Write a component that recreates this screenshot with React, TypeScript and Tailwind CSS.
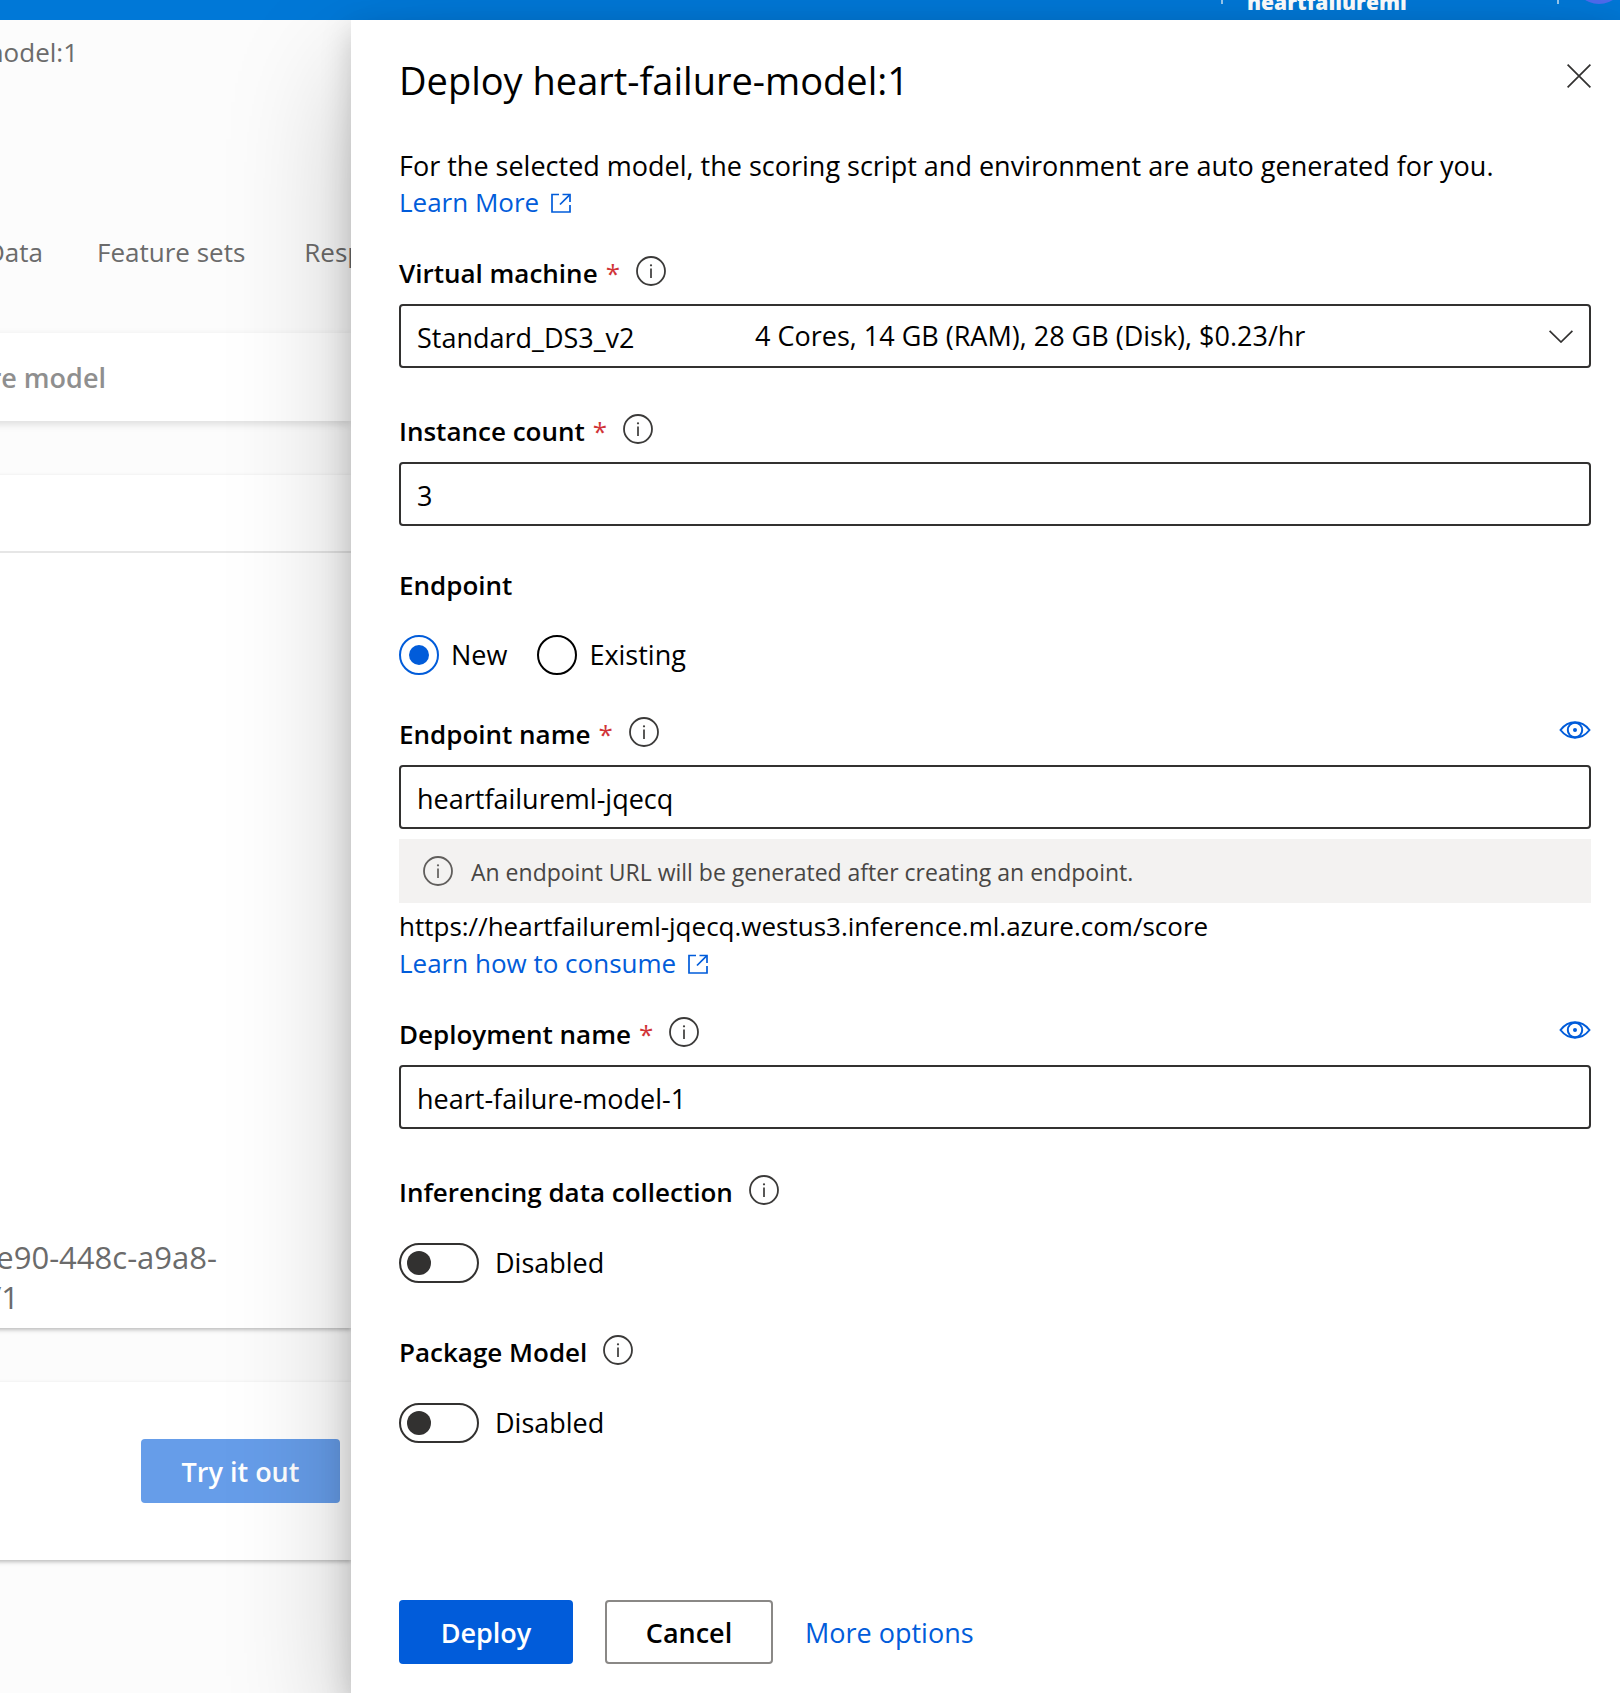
import { useState } from "react";
import type { ReactNode } from "react";

function InfoIcon({ muted = false }: { muted?: boolean }) {
  return (
    <svg viewBox="0 0 30 30" className={muted ? "size-[30px] shrink-0 text-[#605e5c]" : "size-[30px] shrink-0 text-[#3b3a39]"} fill="none" aria-hidden="true">
      <circle cx="15" cy="15" r="14" stroke="currentColor" strokeWidth="1.8" />
      <path d="M15 12.5V22" stroke="currentColor" strokeWidth="1.7" />
      <circle cx="15" cy="9.3" r="1.1" fill="currentColor" />
    </svg>
  );
}

function OpenIcon() {
  return (
    <svg viewBox="0 0 20 20" className="size-5 shrink-0" fill="none" stroke="currentColor" strokeWidth="1.7" aria-hidden="true">
      <path d="M8 1.5H1V19H19V12" />
      <path d="M11.5 1.5H19V9" />
      <path d="M18.6 1.9L9 11.5" />
    </svg>
  );
}

function EyeIcon() {
  return (
    <svg viewBox="0 0 32 18" className="h-[18px] w-8" fill="none" stroke="currentColor" strokeWidth="2" aria-hidden="true">
      <path d="M1.5 9C5 4.5 10 1.3 16 1.3S27 4.5 30.5 9C27 13.5 22 16.7 16 16.7S5 13.5 1.5 9Z" />
      <circle cx="16" cy="9" r="7.2" />
      <circle cx="16" cy="9" r="2" fill="currentColor" stroke="none" />
    </svg>
  );
}

function FieldLabel({ id, text, required = false, reveal = false }: { id: string; text: string; required?: boolean; reveal?: boolean }) {
  return (
    <div className="flex h-[37px] items-start">
      <label htmlFor={id} className="pt-px text-[26px] font-semibold">
        {text}
        {required && <span className="ml-2 font-normal text-[#d13438]">*</span>}
      </label>
      <button type="button" aria-label={`About ${text}`} className="ml-4 mt-0.5">
        <InfoIcon />
      </button>
      {reveal && (
        <button type="button" aria-label={`Show ${text}`} className="ml-auto mt-1.5 text-[#015cda]">
          <EyeIcon />
        </button>
      )}
    </div>
  );
}

function TextField({ id, initial }: { id: string; initial: string }) {
  const [value, setValue] = useState(initial);
  return (
    <input
      id={id}
      type="text"
      value={value}
      onChange={(e) => setValue(e.target.value)}
      className="mt-[13px] block h-16 w-full rounded-sm border-2 border-[#323130] bg-white px-4 pt-0.5"
    />
  );
}

function RadioOption({ value, current, onPick }: { value: string; current: string; onPick: (v: string) => void }) {
  return (
    <label className="flex items-center gap-3">
      <input
        type="radio"
        name="endpoint"
        value={value}
        checked={current === value}
        onChange={() => onPick(value)}
        className="grid size-10 appearance-none place-content-center rounded-full border-2 border-black before:size-5 before:rounded-full checked:border-[#015cda] checked:before:bg-[#015cda]"
      />
      <span className="pb-0.5">{value}</span>
    </label>
  );
}

function Toggle({ id }: { id: string }) {
  const [on, setOn] = useState(false);
  return (
    <div className="mt-[33px] flex h-10 items-center gap-4">
      <input
        id={id}
        type="checkbox"
        role="switch"
        checked={on}
        onChange={() => setOn(!on)}
        className="flex h-10 w-20 appearance-none items-center rounded-full border-2 border-[#323130] px-1.5 before:size-6 before:rounded-full before:bg-[#323130] checked:justify-end"
      />
      <span className="pb-0.5">{on ? "Enabled" : "Disabled"}</span>
    </div>
  );
}

function BlueLink({ children }: { children: ReactNode }) {
  return (
    <a href="#" className="flex w-fit items-center gap-3 text-[26px] text-[#015cda]">
      {children}
      <OpenIcon />
    </a>
  );
}

function Backdrop() {
  return (
    <div className="flex w-[351px] shrink-0 flex-col overflow-hidden whitespace-nowrap bg-[#fcfcfc] text-[#6b6b6b]">
      <div className="flex h-[313px] flex-col text-[26px]">
        <div className="mt-[14px] flex w-[78px] justify-end">model:1</div>
        <nav className="mt-[163px] flex">
          <a href="#" className="flex w-[43px] shrink-0 justify-end">Data</a>
          <a href="#" className="ml-[54px] shrink-0">Feature sets</a>
          <a href="#" className="ml-[59px] min-w-0 overflow-hidden">Resp</a>
        </nav>
      </div>
      <div className="-ml-4 flex h-[88px] items-center bg-white pl-4 shadow-[0_3px_8px_rgba(0,0,0,0.13)]">
        <div className="flex w-[106px] justify-end font-semibold text-[#8f8f8f]">feature model</div>
      </div>
      <section className="-ml-4 mt-[54px] flex h-[853px] flex-col bg-white shadow-[0_2px_4px_rgba(0,0,0,0.25)]">
        <div className="h-[78px] border-b-2 border-[#e6e6e6]" />
        <div className="mt-auto mb-[11px] pl-4 text-[31px] leading-10">
          <div className="flex w-[217px] justify-end">e90-448c-a9a8-</div>
          <div className="flex w-[19px] justify-end">/1</div>
        </div>
      </section>
      <section className="-ml-4 mt-[54px] flex h-[178px] items-center justify-end bg-white pr-[11px] shadow-[0_2px_4px_rgba(0,0,0,0.25)]">
        <button type="button" className="h-16 w-[199px] rounded-sm bg-[#669de9] font-semibold text-white">Try it out</button>
      </section>
    </div>
  );
}

export default function App() {
  const [endpoint, setEndpoint] = useState("New");
  return (
    <div className="flex min-h-screen flex-col overflow-hidden bg-white font-['Open_Sans','Noto_Sans',sans-serif] text-[27px] leading-[37px] text-black">
      <header className="-mr-[5px] flex h-5 items-end justify-end bg-[#0078d7]">
        <div className="mb-4 h-8 w-0.5 bg-white/60" />
        <div className="ml-6 mb-0.5 w-[160px] text-[21px] leading-8 font-extrabold text-white">heartfailureml</div>
        <div className="mb-4 ml-[150px] h-8 w-0.5 bg-white/60" />
        <div className="mb-4 ml-[14px] size-[52px] rounded-full bg-[#4f6bed]" />
      </header>

      <div className="flex grow">
        <Backdrop />
        <main className="relative z-10 flex min-w-0 grow flex-col bg-white pt-[34px] pr-[29px] pb-[29px] pl-12 shadow-[0_51px_115px_rgba(0,0,0,0.22),0_10px_29px_rgba(0,0,0,0.18)]">
          <div className="flex items-start justify-between">
            <h1 className="text-[38px] leading-[52px]">Deploy heart-failure-model:1</h1>
            <button type="button" aria-label="Close" className="mt-[10px]">
              <svg viewBox="0 0 24 24" className="size-6 text-[#323130]" stroke="currentColor" strokeWidth="1.7" aria-hidden="true">
                <path d="M0.6 0.6L23.4 23.4M23.4 0.6L0.6 23.4" />
              </svg>
            </button>
          </div>

          <div className="mt-[41px]">
            <p>For the selected model, the scoring script and environment are auto generated for you.</p>
            <BlueLink>Learn More</BlueLink>
          </div>

          <div className="mt-[33px]">
            <FieldLabel id="vm" text="Virtual machine" required />
            <div className="relative mt-[13px]">
              <select id="vm" className="block h-16 w-full appearance-none rounded-sm border-2 border-[#323130] bg-white px-4 pt-0.5">
                <option>Standard_DS3_v2</option>
              </select>
              <span className="pointer-events-none absolute top-[13px] left-[356px]">4 Cores, 14 GB (RAM), 28 GB (Disk), $0.23/hr</span>
              <svg viewBox="0 0 24 13" className="pointer-events-none absolute top-[26px] right-[18px] h-[13px] w-6" fill="none" stroke="#323130" strokeWidth="1.7" aria-hidden="true">
                <path d="M0.6 0.8L12 12L23.4 0.8" />
              </svg>
            </div>
          </div>

          <div className="mt-11">
            <FieldLabel id="count" text="Instance count" required />
            <TextField id="count" initial="3" />
          </div>

          <fieldset className="mt-[41px]">
            <legend className="text-[26px] font-semibold">Endpoint</legend>
            <div className="mt-[31px] flex gap-[30px]">
              <RadioOption value="New" current={endpoint} onPick={setEndpoint} />
              <RadioOption value="Existing" current={endpoint} onPick={setEndpoint} />
            </div>
          </fieldset>

          <div className="mt-10">
            <FieldLabel id="endpoint-name" text="Endpoint name" required reveal />
            <TextField id="endpoint-name" initial="heartfailureml-jqecq" />
            <div className="mt-[10px] flex h-16 items-center gap-[18px] bg-[#f3f2f1] px-6 text-[23px] text-[#484644]">
              <InfoIcon muted />
              <span className="pt-0.5">An endpoint URL will be generated after creating an endpoint.</span>
            </div>
            <p className="mt-[5px] text-[26px]">https://heartfailureml-jqecq.westus3.inference.ml.azure.com/score</p>
            <BlueLink>Learn how to consume</BlueLink>
          </div>

          <div className="mt-[33px]">
            <FieldLabel id="deployment-name" text="Deployment name" required reveal />
            <TextField id="deployment-name" initial="heart-failure-model-1" />
          </div>

          <div className="mt-11">
            <FieldLabel id="data-collection" text="Inferencing data collection" />
            <Toggle id="data-collection" />
          </div>

          <div className="mt-[50px]">
            <FieldLabel id="package-model" text="Package Model" />
            <Toggle id="package-model" />
          </div>

          <div className="mt-auto flex items-center gap-8">
            <button type="button" className="h-16 w-[174px] rounded-sm bg-[#015cda] font-semibold text-white">Deploy</button>
            <button type="button" className="h-16 w-[168px] rounded-sm border-2 border-[#8a8886] bg-white font-semibold">Cancel</button>
            <button type="button" className="text-[#015cda]">More options</button>
          </div>
        </main>
      </div>
    </div>
  );
}
